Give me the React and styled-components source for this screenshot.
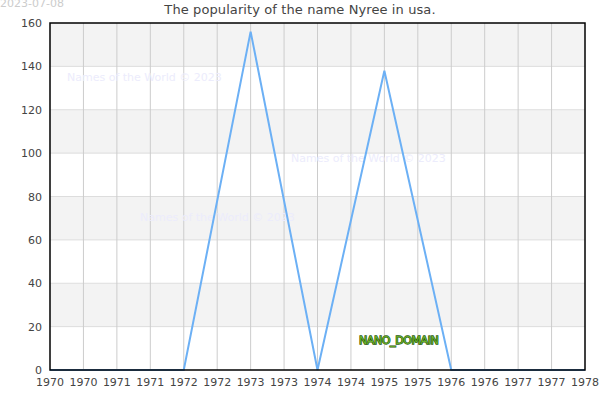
import React from "react";
import styled, { createGlobalStyle } from "styled-components";

const GlobalStyle = createGlobalStyle`
  html, body {
    margin: 0;
    padding: 0;
    background: #ffffff;
  }
`;

const Frame = styled.div`
  width: 600px;
  height: 400px;
  display: flex;
  flex-direction: column;
  background: #ffffff;
  font-family: "DejaVu Sans", sans-serif;
  overflow: hidden;
`;

const Header = styled.div`
  height: 23px;
  display: grid;
  grid-template-columns: 1fr auto 1fr;
  align-items: start;
`;

const Stamp = styled.span`
  font-size: 11px;
  line-height: 11px;
  color: #cccccc;
  margin-top: -2px;
`;

const Title = styled.h1`
  margin: 2px 0 0 0;
  font-size: 13px;
  line-height: 16px;
  font-weight: normal;
  color: #444444;
  letter-spacing: 0.1px;
`;

const Chart = styled.svg`
  display: block;
  overflow: visible;
  font-family: "DejaVu Sans", sans-serif;
`;

// plot box in chart coordinates (chart starts 23px below the top)
const LEFT = 50;
const RIGHT = 585;
const TOP = 0;
const BOTTOM = 347;
const MAX = 160;

const xTicks = [
  "1970", "1970", "1971", "1971", "1972", "1972", "1973", "1973", "1974",
  "1974", "1975", "1975", "1976", "1976", "1977", "1977", "1978",
];

const data = [
  [1970, 0], [1971, 0], [1972, 0], [1973, 156], [1974, 0],
  [1975, 138], [1976, 0], [1977, 0], [1978, 0],
];

const xAt = (year) => LEFT + ((year - 1970) / 8) * (RIGHT - LEFT);
const yAt = (v) => BOTTOM - (v / MAX) * (BOTTOM - TOP);

const marks = [
  { x: 67, y: 58 },
  { x: 291, y: 139 },
  { x: 140, y: 198 },
];

const PopularityChart = () => {
  const bands = [];
  for (let v = 0; v < MAX; v += 20) {
    const shaded = (v / 20) % 2 === 1;
    bands.push(
      <rect
        key={v}
        x={LEFT}
        y={yAt(v + 20)}
        width={RIGHT - LEFT}
        height={yAt(v) - yAt(v + 20)}
        fill={shaded ? "#f3f3f3" : "#ffffff"}
      />
    );
  }

  const points = data.map(([yr, v]) => `${xAt(yr)},${yAt(v)}`).join(" ");
  const step = (RIGHT - LEFT) / (xTicks.length - 1);

  return (
    <Chart width="600" height="377" viewBox="0 0 600 377">
      {bands}
      {[20, 40, 60, 80, 100, 120, 140].map((v) => (
        <line key={v} x1={LEFT} x2={RIGHT} y1={yAt(v)} y2={yAt(v)} stroke="#dddddd" strokeWidth="1" />
      ))}
      {xTicks.map((_, i) =>
        i > 0 && i < xTicks.length - 1 ? (
          <line
            key={i}
            x1={LEFT + i * step}
            x2={LEFT + i * step}
            y1={TOP}
            y2={BOTTOM}
            stroke="#cccccc"
            strokeWidth="1"
          />
        ) : null
      )}
      {marks.map((m, i) => (
        <text key={i} x={m.x} y={m.y} fontSize="11" fill="#ececfc">
          Names of the World © 2023
        </text>
      ))}
      <polyline points={points} fill="none" stroke="#6cb0f5" strokeWidth="2" strokeLinejoin="miter" />
      <rect x={LEFT} y={TOP} width={RIGHT - LEFT} height={BOTTOM - TOP} fill="none" stroke="#000000" strokeWidth="1.5" />
      <text
        x="359"
        y="321"
        fontSize="11"
        fill="#6cb52c"
        stroke="#2a5a0c"
        strokeWidth="1.3"
        paintOrder="stroke"
        fontFamily="DejaVu Sans, sans-serif"
        letterSpacing="-0.4"
      >
        NANO_DOMAIN
      </text>
      {[0, 20, 40, 60, 80, 100, 120, 140, 160].map((v) => (
        <text key={v} x="42" y={yAt(v) + 4} fontSize="11" fill="#444444" textAnchor="end">
          {v}
        </text>
      ))}
      {xTicks.map((label, i) => (
        <text key={i} x={LEFT + i * step} y="363" fontSize="11" fill="#444444" textAnchor="middle">
          {label}
        </text>
      ))}
    </Chart>
  );
};

export default function App() {
  return (
    <>
      <GlobalStyle />
      <Frame>
        <Header>
          <Stamp>2023-07-08</Stamp>
          <Title>The popularity of the name Nyree in usa.</Title>
        </Header>
        <PopularityChart />
      </Frame>
    </>
  );
}
